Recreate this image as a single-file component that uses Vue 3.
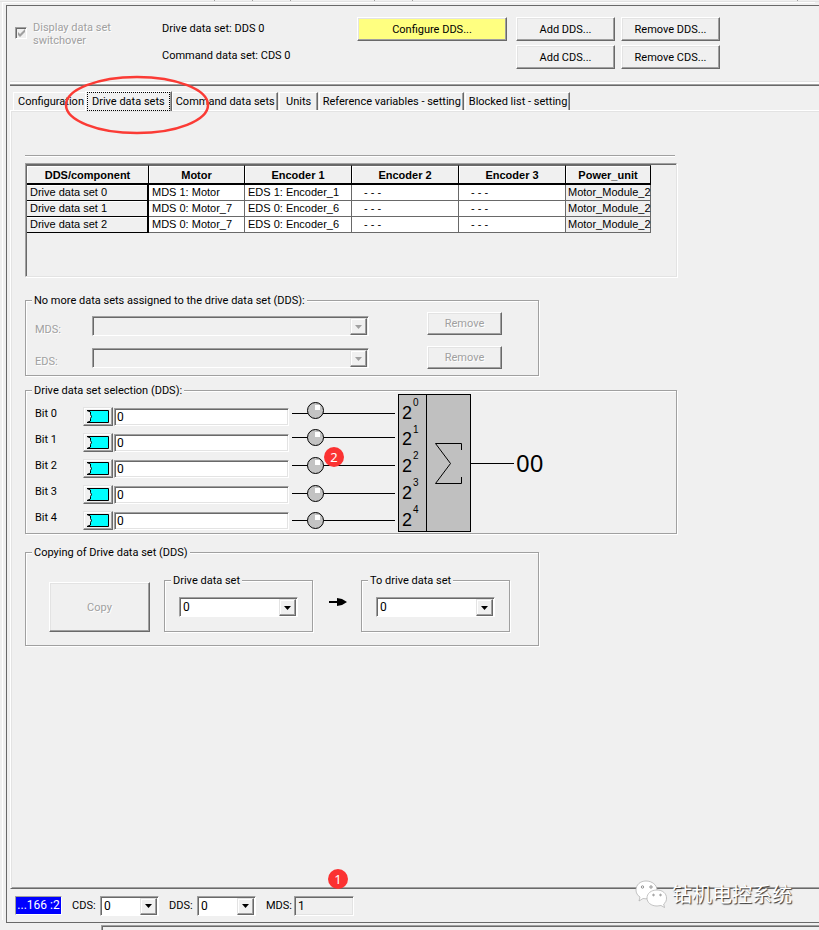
<template>
    <div class="screen">
        <div class="top-strip">
            <i v-for="n in 3" :key="n" class="tick"></i>
            <i class="tick after-gap"></i>
            <i class="tick"></i>
            <i class="tick last"></i>
        </div>

        <main class="frame">
            <header class="header">
                <label class="switchover">
                    <input type="checkbox" checked disabled>
                    <svg class="check" width="7" height="7" viewBox="0 0 7 7">
                        <path d="M0 2v3l2 2 5-5V-1L2 4z" fill="#a0a0a0" />
                    </svg>
                    <span>Display data set switchover</span>
                </label>
                <div class="current">
                    <div>Drive data set: DDS 0</div>
                    <div>Command data set: CDS 0</div>
                </div>
                <div class="actions">
                    <button class="btn highlight">Configure DDS...</button>
                    <button class="btn">Add DDS...</button>
                    <button class="btn">Remove DDS...</button>
                    <button class="btn second">Add CDS...</button>
                    <button class="btn">Remove CDS...</button>
                </div>
            </header>

            <nav class="tabs" role="tablist">
                <button v-for="tab in tabs" :key="tab" class="tab" :class="{ active: tab === activeTab }" role="tab"
                    :aria-selected="tab === activeTab" @click="activeTab = tab">
                    <span>{{ tab }}</span>
                </button>
                <svg class="ellipse" width="148" height="62" viewBox="0 0 148 62">
                    <ellipse cx="74" cy="31" rx="71" ry="28" fill="none" stroke="#fb3b35" stroke-width="2.500" />
                </svg>
            </nav>

            <section class="panel">
                <hr class="rule">

                <div class="grid-box">
                    <table class="grid">
                        <thead>
                            <tr>
                                <th v-for="col in columns" :key="col">{{ col }}</th>
                            </tr>
                        </thead>
                        <tbody>
                            <tr v-for="row in rows" :key="row[0]">
                                <th scope="row">{{ row[0] }}</th>
                                <td v-for="(cell, i) in row.slice(1)" :key="i" :class="{ empty: cell === '- - -' }">{{ cell }}</td>
                            </tr>
                        </tbody>
                    </table>
                </div>

                <fieldset class="group assigned">
                    <legend>No more data sets assigned to the drive data set (DDS):</legend>
                    <div class="body">
                        <div class="sets">
                            <div v-for="name in ['MDS', 'EDS']" :key="name" class="set">
                                <label :for="'set-' + name">{{ name }}:</label>
                                <span class="combo disabled">
                                    <select :id="'set-' + name" disabled></select>
                                    <span class="arrow"><svg width="7" height="4" viewBox="0 0 7 4"><path d="M0 0h7L3.500 4z" /></svg></span>
                                </span>
                            </div>
                        </div>
                        <div class="removes">
                            <button class="btn" disabled>Remove</button>
                            <button class="btn" disabled>Remove</button>
                        </div>
                    </div>
                </fieldset>

                <fieldset class="group selection">
                    <legend>Drive data set selection (DDS):</legend>
                    <div class="body">
                        <div class="bits">
                            <div v-for="(bit, i) in bits" :key="i" class="bit">
                                <label :for="'bit-' + i">Bit {{ i }}</label>
                                <button class="connector" :aria-label="'Connect bit ' + i">
                                    <svg width="24" height="14" viewBox="0 0 24 14">
                                        <path d="M1 0.500H22.500V12.500H1L4.500 11V8.500L5.500 6.500L4.500 4.500V2Z" fill="#00ffff" stroke="#000" />
                                    </svg>
                                </button>
                                <input :id="'bit-' + i" v-model="bits[i]" type="text">
                            </div>
                        </div>
                        <div class="diagram">
                            <svg width="260" height="140" viewBox="0 0 260 140">
                                <g v-for="(line, i) in signals" :key="i">
                                    <path :d="`M3 ${line.wire}.5H106`" stroke="#000" />
                                    <circle cx="26.500" :cy="line.lamp + 0.5" r="8" fill="#c3c3c3" stroke="#000" />
                                    <rect x="26" :y="line.lamp - 5" width="5" height="5" fill="#fff" />
                                </g>
                                <rect x="109.500" y="1.500" width="72" height="137" fill="#c0c0c0" stroke="#000" />
                                <path d="M137.500 1V139M182 70.500H225" stroke="#000" />
                                <g v-for="(line, i) in signals" :key="'p' + i">
                                    <text class="base" x="113" :y="line.base">2</text>
                                    <text class="power" x="124" :y="line.power">{{ i }}</text>
                                </g>
                                <path d="M172.500 57V50.500H146.500L161.500 70.500L146.500 90.500H172.500V84" fill="none" stroke="#000" />
                                <text class="result" x="227" y="79">00</text>
                            </svg>
                            <span class="badge">2</span>
                        </div>
                    </div>
                </fieldset>

                <fieldset class="group copying">
                    <legend>Copying of Drive data set (DDS)</legend>
                    <div class="body">
                        <button class="btn copy" disabled>Copy</button>
                        <fieldset class="group inner">
                            <legend><label for="copy-from">Drive data set</label></legend>
                            <span class="combo">
                                <select id="copy-from" v-model="copyFrom">
                                    <option v-for="n in 3" :key="n">{{ n - 1 }}</option>
                                </select>
                                <span class="arrow"><svg width="7" height="4" viewBox="0 0 7 4"><path d="M0 0h7L3.500 4z" /></svg></span>
                            </span>
                        </fieldset>
                        <svg class="to" width="18" height="8" viewBox="0 0 18 8">
                            <path d="M0 3H8V0L13 1L18 4L13 7L8 8V5H0Z" />
                        </svg>
                        <fieldset class="group inner">
                            <legend><label for="copy-to">To drive data set</label></legend>
                            <span class="combo">
                                <select id="copy-to" v-model="copyTo">
                                    <option v-for="n in 3" :key="n">{{ n - 1 }}</option>
                                </select>
                                <span class="arrow"><svg width="7" height="4" viewBox="0 0 7 4"><path d="M0 0h7L3.500 4z" /></svg></span>
                            </span>
                        </fieldset>
                    </div>
                </fieldset>
            </section>

            <footer class="footer">
                <span class="device">...166 :2</span>
                <label for="cds">CDS:</label>
                <span class="combo">
                    <select id="cds" v-model="cds">
                        <option v-for="n in 2" :key="n">{{ n - 1 }}</option>
                    </select>
                    <span class="arrow"><svg width="7" height="4" viewBox="0 0 7 4"><path d="M0 0h7L3.500 4z" /></svg></span>
                </span>
                <label for="dds">DDS:</label>
                <span class="combo">
                    <select id="dds" v-model="dds">
                        <option v-for="n in 3" :key="n">{{ n - 1 }}</option>
                    </select>
                    <span class="arrow"><svg width="7" height="4" viewBox="0 0 7 4"><path d="M0 0h7L3.500 4z" /></svg></span>
                </span>
                <label for="mds">MDS:</label>
                <input id="mds" type="text" value="1" readonly>
                <span class="badge">1</span>
                <div class="watermark">
                    <svg width="32" height="28" viewBox="0 0 32 28">
                        <g fill="#fff" stroke="#aaa" stroke-width="0.700">
                            <path d="M11 1C5 1 1 5 1 10c0 3 1.500 5.500 4 7l-1 4 4-2.500c8 1.500 14-3 14-8.500C22 5 17 1 11 1z" />
                            <path d="M22 10c-6 0-10 3.500-10 8s4 8 10 8l4-.5 3.500 2-.8-3.500c2-1.500 2.800-3.500 2.800-6 0-4.500-4-8-9.500-8z" />
                        </g>
                        <g fill="#fff" stroke="#777" stroke-width="0.800">
                            <circle cx="7.500" cy="7" r="1.200" />
                            <circle cx="16" cy="7" r="1.200" />
                            <circle cx="18.500" cy="15" r="0.800" />
                            <circle cx="25.500" cy="15" r="0.800" />
                        </g>
                    </svg>
                    <span>钻机电控系统</span>
                </div>
            </footer>
        </main>

        <div class="bottom-strip"></div>
    </div>
</template>

<script setup>
import { ref } from 'vue'

const tabs = [
    'Configuration',
    'Drive data sets',
    'Command data sets',
    'Units',
    'Reference variables - setting',
    'Blocked list - setting'
]
const activeTab = ref('Drive data sets')

const columns = ['DDS/component', 'Motor', 'Encoder 1', 'Encoder 2', 'Encoder 3', 'Power_unit']
const rows = [
    ['Drive data set 0', 'MDS 1: Motor', 'EDS 1: Encoder_1', '- - -', '- - -', 'Motor_Module_2'],
    ['Drive data set 1', 'MDS 0: Motor_7', 'EDS 0: Encoder_6', '- - -', '- - -', 'Motor_Module_2'],
    ['Drive data set 2', 'MDS 0: Motor_7', 'EDS 0: Encoder_6', '- - -', '- - -', 'Motor_Module_2']
]

const bits = ref(['0', '0', '0', '0', '0'])

// y positions of each wire, its lamp and the power of two beside it
const signals = [
    { wire: 20, lamp: 17, base: 26, power: 13 },
    { wire: 44, lamp: 44, base: 52, power: 40 },
    { wire: 72, lamp: 72, base: 79, power: 66 },
    { wire: 100, lamp: 100, base: 106, power: 93 },
    { wire: 127, lamp: 127, base: 133, power: 120 }
]

const copyFrom = ref('0')
const copyTo = ref('0')
const cds = ref('0')
const dds = ref('0')
</script>

<style>
body {
    background: #f0f0f0;
}
</style>

<style scoped>
.screen {
    display: flex;
    flex-direction: column;
    box-sizing: border-box;
    min-height: 100vh;
    color: #000;
    font-family: Roboto, "Liberation Sans", Arial, sans-serif;
    font-size: 11px;
    line-height: 13px;
}

.screen * {
    box-sizing: border-box;
}

button,
input,
select {
    margin: 0;
    padding: 0;
    color: inherit;
    font: inherit;
    border-radius: 0;
}

.top-strip {
    display: flex;
    gap: 37px;
    height: 2px;
    padding: 0 21px 0 214px;
    border-bottom: 1px solid #e3e3e3;
}

.tick {
    width: 1px;
    height: 1px;
    background: #a0a0a0;
}

.tick.after-gap {
    margin-left: 46px;
}

.tick.last {
    margin-left: auto;
}

.frame {
    display: flex;
    flex: 1;
    flex-direction: column;
    margin: 3px 0 0 6px;
    padding-left: 3px;
    border: solid #696969;
    border-width: 1px 0 1px 1px;
    box-shadow: -3px -2px 0 #f0f0f0, -4px -3px 0 #fff;
}

/* header */
.header {
    display: flex;
    height: 80px;
    padding: 11px 0 0 5px;
    border-bottom: 1px solid #696969;
    box-shadow: inset 0 -1px 0 #a0a0a0, inset 0 -3px 0 #fff, inset 0 -4px 0 #e3e3e3;
}

.switchover {
    position: relative;
    display: flex;
    gap: 6px;
    width: 147px;
    padding-top: 4px;
    color: #a0a0a0;
    text-shadow: 1px 1px 0 #fff;
}

.switchover span {
    width: 90px;
}

.switchover input {
    appearance: none;
    width: 12px;
    height: 12px;
    margin-top: 6px;
    border: 1px solid;
    border-color: #a0a0a0 #fff #fff #a0a0a0;
    box-shadow: inset 1px 1px 0 #696969;
}

.check {
    position: absolute;
    top: 13px;
    left: 3px;
    overflow: visible;
}

.current {
    display: flex;
    flex-direction: column;
    gap: 14px;
    width: 195px;
    padding-top: 5px;
}

.actions {
    display: grid;
    grid-template-columns: 153px 99px 99px;
    grid-auto-rows: 24px;
    gap: 4px 6px;
}

.actions .highlight {
    margin-right: 3px;
}

.actions .second {
    grid-column: 2;
}

.btn {
    border: 1px solid;
    border-color: #fff #696969 #696969 #fff;
    background: #f0f0f0;
    box-shadow: inset -1px -1px 0 #a0a0a0, inset 1px 1px 0 #e3e3e3;
}

.btn.highlight {
    background: #ffff80;
}

.btn:disabled {
    color: #a0a0a0;
    text-shadow: 1px 1px 0 #fff;
}

/* tabs */
.tabs {
    position: relative;
    display: flex;
    align-items: flex-end;
    height: 24px;
    padding-left: 3px;
}

.tab {
    min-width: 39px;
    height: 18px;
    margin-right: 1px;
    padding: 0 2px 0 3px;
    border: 1px solid;
    border-color: #fff #696969 transparent #fff;
    border-bottom: 0;
    background: #f0f0f0;
    box-shadow: inset -1px 0 0 #a0a0a0;
    white-space: nowrap;
}

.tab:first-child {
    margin-right: 0;
    padding: 0 0 0 4px;
    border-right-color: transparent;
    box-shadow: none;
}

.tab.active {
    z-index: 1;
    height: 20px;
    margin: 0 0 -1px;
    padding: 0 1px;
}

.tab.active span {
    display: block;
    padding: 2px 4px;
    border: 1px dotted #000;
}

.ellipse {
    position: absolute;
    top: -12px;
    left: 53px;
    z-index: 2;
    pointer-events: none;
}

/* main panel */
.panel {
    flex: 1;
    padding: 44px 14px 0;
    border: 1px solid #fff;
    border-right: 0;
    border-bottom-color: #696969;
    box-shadow: inset 1px 1px 0 #e3e3e3, inset 0 -1px 0 #a0a0a0;
}

.rule {
    max-width: 650px;
    height: 2px;
    margin: 0 0 6px;
    border: 0;
    border-top: 1px solid #a0a0a0;
    border-bottom: 1px solid #fff;
}

.grid-box {
    max-width: 652px;
    height: 114px;
    padding: 1px;
    border: 1px solid;
    border-color: #a0a0a0 #e3e3e3 #e3e3e3 #a0a0a0;
    box-shadow: inset 1px 1px 0 #696969, 1px 1px 0 #fff;
}

.grid {
    width: 624px;
    table-layout: fixed;
    border-collapse: separate;
    border-spacing: 0;
    font-family: "Liberation Sans", Arial, sans-serif;
}

.grid th,
.grid td {
    height: 16px;
    padding: 1px 0 0 3px;
    border: solid #696969;
    border-width: 0 1px 1px 0;
    background: #fff;
    font-weight: normal;
    line-height: 13px;
    text-align: left;
    vertical-align: top;
    white-space: nowrap;
}

.grid thead th {
    width: 107px;
    height: 20px;
    padding: 1px 0 0;
    border-color: #000;
    border-top: 1px solid #696969;
    border-bottom: 2px solid #000;
    background: #f0f0f0;
    box-shadow: inset 1px 1px 0 #fff;
    font-weight: bold;
    text-align: center;
    vertical-align: middle;
}

.grid thead th:first-child {
    width: 122px;
}

.grid thead th:nth-child(2) {
    width: 96px;
}

.grid thead th:last-child {
    width: 85px;
}

.grid tbody th {
    border-right: 2px solid #000;
    border-bottom-color: #000;
    background: #f0f0f0;
    box-shadow: inset 0 1px 0 #fff;
}

.grid td.empty {
    padding-left: 12px;
}

.grid td:last-child {
    padding-left: 2px;
    background: #f0f0f0;
}

/* groups */
.group {
    min-width: 0;
    margin: 0;
    padding: 0;
    border: 1px solid #a0a0a0;
    box-shadow: 1px 1px 0 #fff, inset 1px 1px 0 #fff;
}

.group legend {
    margin-left: 6px;
    padding: 0 2px;
    background: #f0f0f0;
}

.group .body {
    display: flex;
}

.assigned {
    max-width: 514px;
    margin-top: 17px;
}

.assigned .body {
    gap: 58px;
    padding: 5px 9px 6px;
}

.sets {
    display: flex;
    flex-direction: column;
    gap: 12px;
    padding-top: 4px;
}

.set {
    display: flex;
    align-items: flex-end;
    color: #a0a0a0;
    text-shadow: 1px 1px 0 #fff;
}

.set label {
    width: 57px;
}

.set .combo {
    width: 277px;
}

.removes {
    display: flex;
    flex-direction: column;
    gap: 11px;
}

.removes .btn {
    width: 75px;
    height: 23px;
}

.combo {
    position: relative;
    display: flex;
    width: 59px;
    height: 20px;
    border: 1px solid;
    border-color: #a0a0a0 #fff #fff #a0a0a0;
    background: #fff;
    box-shadow: inset 1px 1px 0 #696969;
}

.combo select {
    appearance: none;
    width: 100%;
    padding: 1px 0 0 3px;
    border: 0;
    outline: 0;
    background: transparent;
    font-size: 12px;
}

.combo .arrow {
    position: absolute;
    top: 1px;
    right: 1px;
    bottom: 0;
    display: flex;
    align-items: center;
    justify-content: center;
    width: 17px;
    border: 1px solid;
    border-color: #e3e3e3 #696969 #696969 #e3e3e3;
    background: #f0f0f0;
    box-shadow: inset -1px -1px 0 #a0a0a0, inset 1px 1px 0 #fff;
    pointer-events: none;
}

.combo.disabled {
    background: #f0f0f0;
    fill: #a0a0a0;
}

/* selection */
.selection {
    max-width: 652px;
    margin-top: 8px;
}

.bits {
    display: flex;
    flex-direction: column;
    gap: 7px;
    padding: 10px 0 3px 9px;
}

.bit {
    display: flex;
    height: 19px;
}

.bit label {
    width: 48px;
    line-height: 14px;
}

.connector {
    width: 30px;
    height: 19px;
    border: 1px solid;
    border-color: #e3e3e3 #696969 #696969 #e3e3e3;
    background: #f0f0f0;
    box-shadow: inset -1px -1px 0 #a0a0a0, inset 1px 1px 0 #fff;
}

.connector svg {
    display: block;
    margin-left: 2px;
}

.bit input,
.footer input {
    border: 1px solid;
    border-color: #a0a0a0 #fff #fff #a0a0a0;
    outline: 0;
    background: #fff;
    box-shadow: inset 1px 1px 0 #696969, inset -1px -1px 0 #e3e3e3;
    font-size: 12px;
}

.bit input {
    width: 175px;
    height: 18px;
    margin: 1px 0 0 1px;
    padding-left: 2px;
}

.diagram {
    position: relative;
    height: 136px;
    margin-top: -4px;
}

.diagram svg {
    display: block;
}

.diagram text {
    font-family: "Liberation Sans", Arial, sans-serif;
}

.diagram .base {
    font-size: 18px;
}

.diagram .power {
    font-size: 10px;
}

.diagram .result {
    font-family: "Noto Sans", sans-serif;
    font-size: 24px;
}

.badge {
    position: absolute;
    width: 20px;
    height: 20px;
    border-radius: 50%;
    background: #fb3232;
    color: #fff;
    font-family: "Noto Sans", sans-serif;
    font-size: 13px;
    line-height: 20px;
    text-align: center;
}

.diagram .badge {
    top: 54px;
    left: 35px;
}

/* copying */
.copying {
    max-width: 514px;
    margin-top: 12px;
}

.copying .body {
    align-items: flex-end;
    padding: 15px 0 13px 23px;
}

.copy {
    width: 101px;
    height: 50px;
    margin-right: 14px;
}

.inner {
    width: 149px;
}

.inner .combo {
    width: 119px;
    margin: 10px 0 14px 14px;
}

.to {
    margin: 0 14px 26px 16px;
}

/* footer */
.footer {
    position: relative;
    display: flex;
    align-items: center;
    height: 33px;
    padding-left: 5px;
}

.footer label {
    min-width: 28px;
    margin-left: 10px;
}

.footer input {
    width: 60px;
    height: 20px;
    padding-left: 3px;
    background: #f0f0f0;
}

.device {
    width: 47px;
    height: 19px;
    border: 1px solid;
    border-color: #a0a0a0 #fff #fff #a0a0a0;
    background: #0000ff;
    color: #fff;
    font-size: 12px;
    line-height: 17px;
    text-align: center;
}

.footer .badge {
    top: -20px;
    left: 318px;
}

.watermark {
    position: absolute;
    right: 27px;
    bottom: 14px;
    display: flex;
    align-items: center;
    gap: 5px;
    color: #fff;
    font-family: "Noto Sans CJK SC", sans-serif;
    font-size: 20px;
    line-height: 28px;
    text-shadow: 1px 1px 1px #333;
}

.bottom-strip {
    height: 5px;
    margin: 2px 0 0 101px;
    border: solid #a0a0a0;
    border-width: 1px 0 0 1px;
    box-shadow: inset 1px 1px 0 #696969;
}
</style>
